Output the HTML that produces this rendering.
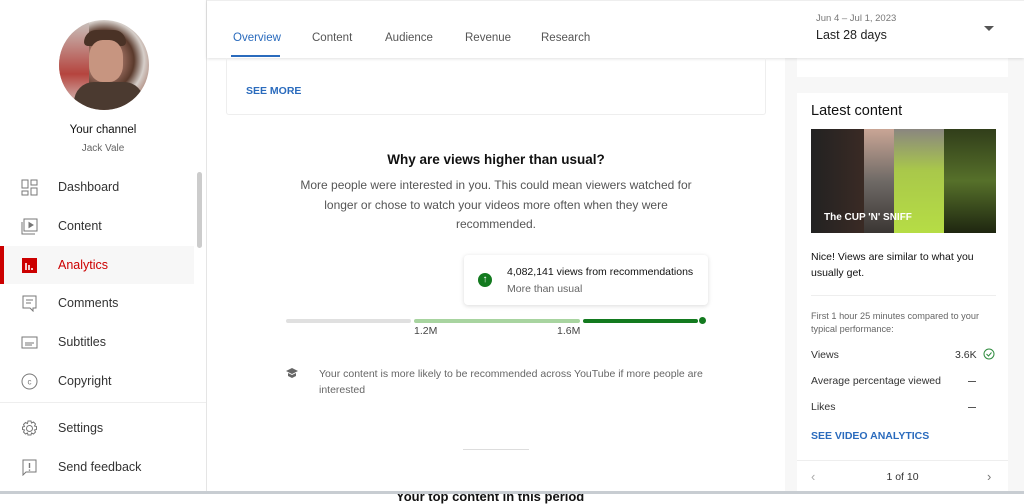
<!DOCTYPE html>
<html><head><style>
*{margin:0;padding:0;box-sizing:border-box}
body{width:1024px;height:494px;overflow:hidden;background:#fff;font-family:"Liberation Sans",sans-serif;position:relative;color:#0d0d0d}
.abs{position:absolute}
#side{left:0;top:0;width:207px;height:494px;border-right:1px solid #e5e5e5;background:#fff}
.nav{position:absolute;left:0;width:194px;height:38px;display:flex;align-items:center;font-size:12.5px;color:#333}
.nav .ic{position:absolute;left:21px;width:17px;height:17px}
.nav span{position:absolute;left:58px}
#right{left:785px;top:0;width:239px;height:494px;background:#f7f7f7}
.card{background:#fff;position:absolute}
</style></head><body>
<div id="side" class="abs">
 <div class="abs" style="left:59px;top:20px;width:90px;height:90px;border-radius:50%;background:radial-gradient(circle at 50% 45%,#c89a85 0,#a9786a 22%,#5a3a2c 45%,#d6cfca 60%,#9d6b5b 80%);overflow:hidden">
  <div class="abs" style="left:0;top:0;width:30px;height:90px;background:linear-gradient(#c9c4bf,#b5443e 60%,#d9d4d0)"></div>
  <div class="abs" style="left:25px;top:10px;width:42px;height:16px;background:#4a3226;border-radius:20px 20px 6px 6px"></div>
  <div class="abs" style="left:30px;top:20px;width:34px;height:42px;background:#c79580;border-radius:40%"></div>
  <div class="abs" style="left:15px;top:62px;width:70px;height:30px;background:#4b3a30;border-radius:20px 20px 0 0"></div>
 </div>
 <div class="abs" style="left:0;width:206px;top:124px;text-align:center;font-size:11.5px;color:#111">Your channel</div>
 <div class="abs" style="left:0;width:206px;top:143px;text-align:center;font-size:10px;color:#666">Jack Vale</div>
 <div class="abs" style="left:197px;top:172px;width:5px;height:76px;background:#ccc;border-radius:3px"></div>
 <div class="nav" style="top:168px"><svg class="ic" viewBox="0 0 17 17" fill="none" stroke="#777" stroke-width="1"><rect x="1" y="1" width="6" height="8"/><rect x="10" y="1" width="6" height="5"/><rect x="1" y="12" width="6" height="4"/><rect x="10" y="9" width="6" height="7"/></svg><span>Dashboard</span></div>
 <div class="nav" style="top:207px"><svg class="ic" viewBox="0 0 17 17" fill="none" stroke="#777" stroke-width="1"><rect x="3" y="1" width="13" height="12"/><path d="M1 4v12h13"/><path d="M8 4.5l4 2.5-4 2.5z" fill="#777"/></svg><span>Content</span></div>
 <div class="nav" style="top:246px;background:#f7f7f7"><div class="abs" style="left:0;top:0;width:4px;height:38px;background:#cc0000"></div><svg class="ic" viewBox="0 0 17 17"><rect x="1" y="1" width="15" height="15" fill="#cc0000"/><path d="M5 6v7M8 8v5M11 11v2" stroke="#fff" stroke-width="1.6"/></svg><span style="color:#cc0000">Analytics</span></div>
 <div class="nav" style="top:284px"><svg class="ic" viewBox="0 0 17 17" fill="none" stroke="#777" stroke-width="1"><path d="M2 1h13v12H12v3l-3-3H2z"/><path d="M5 5h7M5 8h5"/></svg><span>Comments</span></div>
 <div class="nav" style="top:323px"><svg class="ic" viewBox="0 0 17 17" fill="none" stroke="#777" stroke-width="1"><rect x="1" y="3" width="15" height="11"/><path d="M4 9h9M4 11h7"/></svg><span>Subtitles</span></div>
 <div class="nav" style="top:362px"><svg class="ic" viewBox="0 0 17 17" fill="none" stroke="#777" stroke-width="1"><circle cx="8.5" cy="8.5" r="7.5"/><text x="8.5" y="11.5" font-size="8" text-anchor="middle" fill="#777" stroke="none" font-family="Liberation Sans">c</text></svg><span>Copyright</span></div>
 <div class="abs" style="left:0;top:402px;width:206px;height:1px;background:#eee"></div>
 <div class="nav" style="top:409px"><svg class="ic" viewBox="0 0 17 17" fill="none" stroke="#777" stroke-width="1"><circle cx="8.5" cy="8.5" r="3"/><path d="M7 1h3l.5 2 2-1 2 2-1 2 2 .5v3l-2 .5 1 2-2 2-2-1-.5 2H7l-.5-2-2 1-2-2 1-2-2-.5V7l2-.5-1-2 2-2 2 1z"/></svg><span>Settings</span></div>
 <div class="nav" style="top:448px"><svg class="ic" viewBox="0 0 17 17" fill="none" stroke="#777" stroke-width="1"><path d="M2 1h13v12H5l-3 3z"/><path d="M8.5 4v5M8.5 10.5v1.2" stroke-width="1.4"/></svg><span>Send feedback</span></div>
</div>

<div id="right" class="abs">
 <div class="card" style="left:12px;top:58px;width:211px;height:19px"></div>
 <div class="card" style="left:12px;top:93px;width:211px;height:401px">
  <div class="abs" style="left:14px;top:10px;font-size:14.5px;color:#111">Latest content</div>
  <div class="abs" style="left:14px;top:36px;width:185px;height:104px;background:#111;overflow:hidden">
   <div class="abs" style="left:0;top:0;width:53px;height:104px;background:linear-gradient(90deg,#222,#3a2a24)"></div>
   <div class="abs" style="left:53px;top:0;width:30px;height:104px;background:linear-gradient(#c9a595,#6f6a66 50%,#3a3633)"></div>
   <div class="abs" style="left:83px;top:0;width:50px;height:104px;background:linear-gradient(#8a8680,#a9c84a 40%,#b6dd45)"></div>
   <div class="abs" style="left:133px;top:0;width:52px;height:104px;background:linear-gradient(#313e1a,#56702a 50%,#1e2610)"></div>
   <div class="abs" style="left:13px;top:83px;font-size:10px;font-weight:bold;color:#fff">The CUP 'N' SNIFF</div>
  </div>
  <div class="abs" style="left:14px;top:156px;width:185px;font-size:10.5px;line-height:16px;color:#111">Nice! Views are similar to what you usually get.</div>
  <div class="abs" style="left:14px;top:202px;width:185px;height:1px;background:#eee"></div>
  <div class="abs" style="left:14px;top:217px;width:190px;font-size:9.2px;line-height:13px;color:#666">First 1 hour 25 minutes compared to your typical performance:</div>
  <div class="abs" style="left:14px;top:256px;font-size:10.5px;color:#333">Views</div>
  <div class="abs" style="left:158px;top:256px;font-size:10.5px;color:#333">3.6K</div>
  <svg class="abs" style="left:186px;top:255px" width="12" height="12" viewBox="0 0 12 12" fill="none" stroke="#2e8b3e"><circle cx="6" cy="6" r="5"/><path d="M3.5 6l2 2 3-3.5"/></svg>
  <div class="abs" style="left:14px;top:282px;font-size:10.5px;color:#333">Average percentage viewed</div>
  <div class="abs" style="left:14px;top:308px;font-size:10.5px;color:#333">Likes</div>
  <div class="abs" style="left:171px;top:288px;width:8px;height:1px;background:#555"></div>
  <div class="abs" style="left:171px;top:314px;width:8px;height:1px;background:#555"></div>
  <div class="abs" style="left:14px;top:337px;font-size:10.5px;font-weight:bold;color:#2a6bbd">SEE VIDEO ANALYTICS</div>
  <div class="abs" style="left:0;top:367px;width:211px;height:1px;background:#eee"></div>
  <div class="abs" style="left:14px;top:376px;font-size:13px;color:#aaa">‹</div>
  <div class="abs" style="left:0;width:211px;top:378px;text-align:center;font-size:10.5px;color:#333">1 of 10</div>
  <div class="abs" style="left:190px;top:376px;font-size:13px;color:#777">›</div>
 </div>
</div>

<div class="abs" style="left:207px;top:0;width:817px;height:58px;background:#fff;box-shadow:0 1px 3px rgba(0,0,0,.12);border-top:1px solid #eee"></div>
<div class="abs" style="left:233px;top:32px;font-size:11.5px;color:#2a6bbd">Overview</div>
<div class="abs" style="left:231px;top:55px;width:49px;height:2px;background:#2a6bbd"></div>
<div class="abs" style="left:312px;top:32px;font-size:11.5px;color:#555">Content</div>
<div class="abs" style="left:385px;top:32px;font-size:11.5px;color:#555">Audience</div>
<div class="abs" style="left:465px;top:32px;font-size:11.5px;color:#555">Revenue</div>
<div class="abs" style="left:541px;top:32px;font-size:11.5px;color:#555">Research</div>
<div class="abs" style="left:816px;top:13px;font-size:9.5px;color:#777">Jun 4 – Jul 1, 2023</div>
<div class="abs" style="left:816px;top:28px;font-size:12.5px;color:#222">Last 28 days</div>
<div class="abs" style="left:984px;top:26px;width:0;height:0;border-left:5px solid transparent;border-right:5px solid transparent;border-top:5px solid #555"></div>

<div class="abs" style="left:226px;top:58px;width:540px;height:57px;border:1px solid #eee;border-top:none;border-radius:0 0 3px 3px"></div>
<div class="abs" style="left:246px;top:85px;font-size:10.5px;font-weight:bold;color:#2a6bbd">SEE MORE</div>

<div class="abs" style="left:226px;top:152px;width:540px;text-align:center;font-size:13.5px;font-weight:bold;color:#111">Why are views higher than usual?</div>
<div class="abs" style="left:291px;top:176px;width:410px;text-align:center;font-size:12px;line-height:19.5px;color:#555">More people were interested in you. This could mean viewers watched for longer or chose to watch your videos more often when they were recommended.</div>

<div class="abs" style="left:464px;top:255px;width:244px;height:50px;background:#fff;border-radius:4px;box-shadow:0 1px 5px rgba(0,0,0,.15)"></div>
<div class="abs" style="left:478px;top:273px;width:14px;height:14px;border-radius:50%;background:#137a1f;color:#fff;font-size:10px;line-height:14px;text-align:center;font-weight:bold">↑</div>
<div class="abs" style="left:507px;top:266px;font-size:10.5px;color:#111">4,082,141 views from recommendations</div>
<div class="abs" style="left:507px;top:283px;font-size:10.5px;color:#666">More than usual</div>

<div class="abs" style="left:286px;top:319px;width:125px;height:4px;border-radius:2px;background:#e0e0e0"></div>
<div class="abs" style="left:414px;top:319px;width:166px;height:4px;border-radius:2px;background:#a8d4a0"></div>
<div class="abs" style="left:583px;top:319px;width:115px;height:4px;border-radius:2px;background:#137a1f"></div>
<div class="abs" style="left:699px;top:317px;width:7px;height:7px;border-radius:50%;background:#137a1f"></div>
<div class="abs" style="left:414px;top:325px;font-size:10.5px;color:#444">1.2M</div>
<div class="abs" style="left:557px;top:325px;font-size:10.5px;color:#444">1.6M</div>

<svg class="abs" style="left:285px;top:367px" width="14" height="12" viewBox="0 0 14 12"><path d="M7 1L1 4l6 3 6-3z" fill="#666"/><path d="M3 6v3l4 2 4-2V6L7 8z" fill="#666"/></svg>
<div class="abs" style="left:319px;top:366px;width:400px;font-size:10.5px;line-height:16px;color:#666">Your content is more likely to be recommended across YouTube if more people are interested</div>
<div class="abs" style="left:463px;top:449px;width:66px;height:1px;background:#ddd"></div>
<div class="abs" style="left:396px;top:489px;font-size:13px;font-weight:bold;color:#111">Your top content in this period</div>
<div class="abs" style="left:0;top:491px;width:1024px;height:3px;background:#c8cdd2"></div>
</body></html>
